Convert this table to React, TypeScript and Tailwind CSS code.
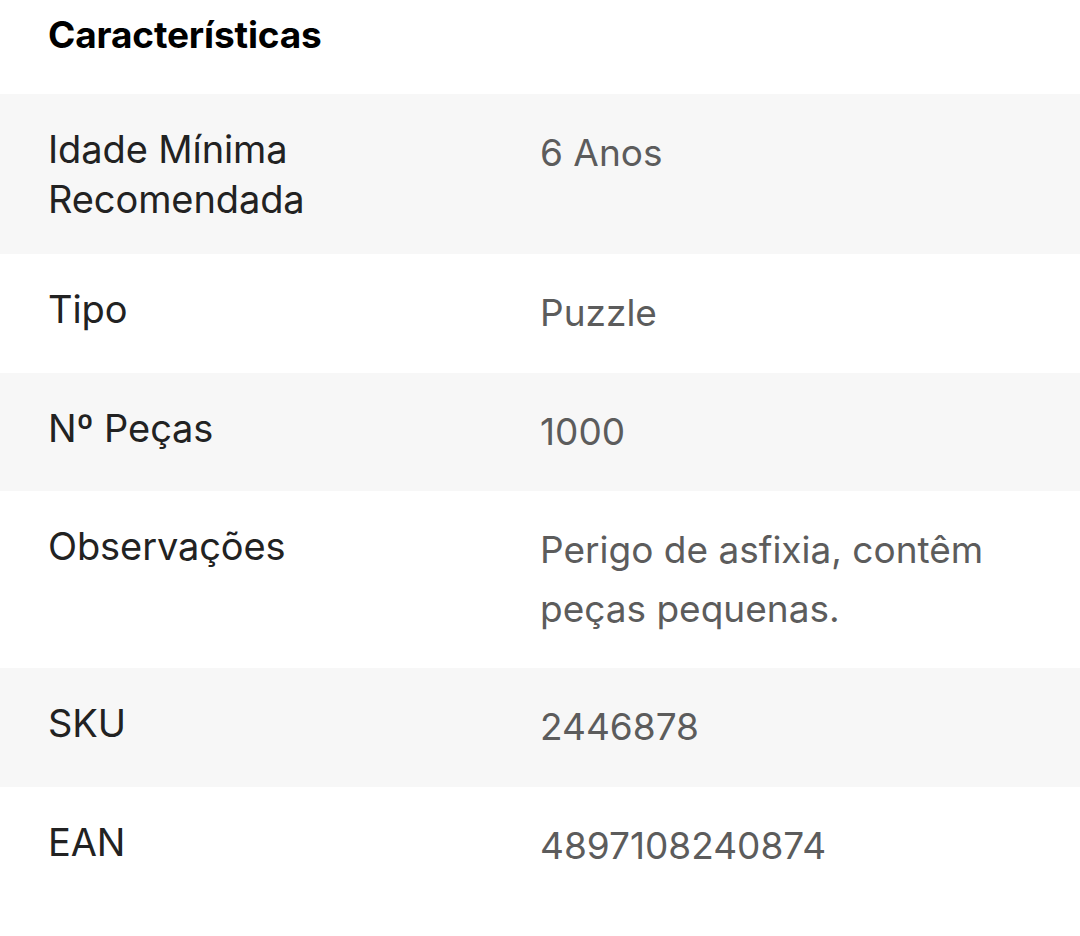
import React from "react";

const rows: { label: string; value: string }[] = [
    { label: "Idade Mínima Recomendada", value: "6 Anos" },
    { label: "Tipo", value: "Puzzle" },
    { label: "Nº Peças", value: "1000" },
    { label: "Observações", value: "Perigo de asfixia, contêm peças pequenas." },
    { label: "SKU", value: "2446878" },
    { label: "EAN", value: "4897108240874" },
];

export default function App() {
    return (
        <div className="w-[1080px] h-[936px] overflow-hidden bg-white font-['Inter',sans-serif]">
            {/* Header */}
            <div className="h-[94px] px-12 flex items-start pt-[11px]">
                <h2 className="text-[37px] leading-[48px] font-bold text-black tracking-[-0.15px]">
                    Características
                </h2>
            </div>

            {/* Spec table */}
            <div>
                {rows.map((row, i) => (
                    <div
                        key={row.label}
                        className={
                            "grid grid-cols-2 px-12 py-[30px] " +
                            (i % 2 === 0 ? "bg-[#f7f7f7]" : "bg-white")
                        }
                    >
                        <div className="text-[38px] leading-[50px] text-[#222222] pr-8 tracking-[-0.1px]">
                            {row.label}
                        </div>
                        <div className="text-[37px] leading-[58.5px] text-[#5c5c5c]">
                            {row.value}
                        </div>
                    </div>
                ))}
            </div>
        </div>
    );
}
